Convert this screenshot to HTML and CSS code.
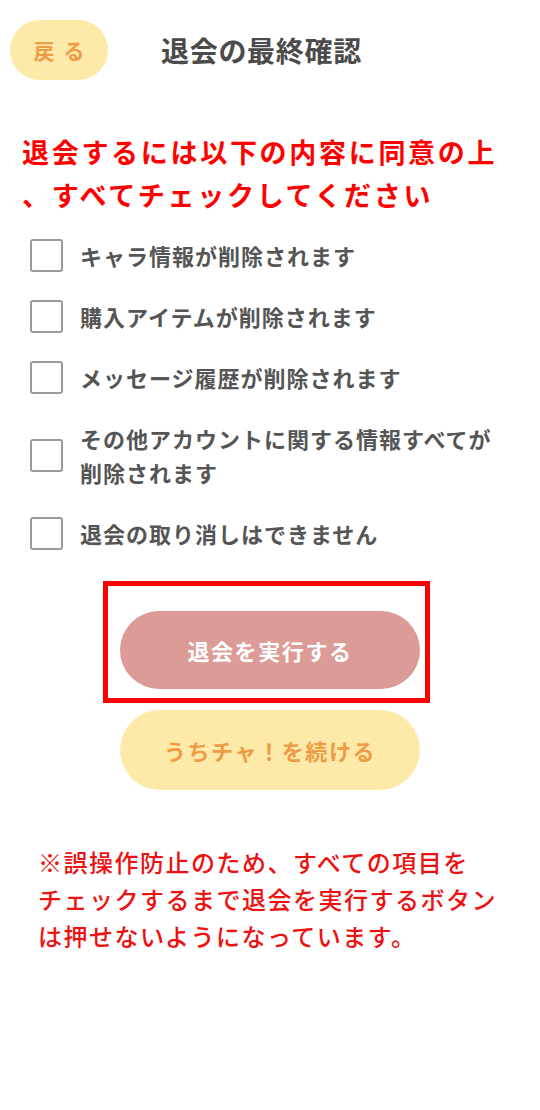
FILE: index.html
```html
<!DOCTYPE html>
<html lang="ja">
<head>
  <meta charset="utf-8">
  <title>退会の最終確認</title>
  <link rel="stylesheet" href="styles.css">
</head>
<body>
  <div class="page">
    <div class="header">
      <button class="back-button">戻る</button>
      <h1 class="title">退会の最終確認</h1>
    </div>

    <p class="lead">退会するには以下の内容に同意の上<br>、すべてチェックしてください</p>

    <ul class="check-list">
      <li class="check-item"><span class="check-box"></span><span class="check-text">キャラ情報が削除されます</span></li>
      <li class="check-item"><span class="check-box"></span><span class="check-text">購入アイテムが削除されます</span></li>
      <li class="check-item"><span class="check-box"></span><span class="check-text">メッセージ履歴が削除されます</span></li>
      <li class="check-item"><span class="check-box"></span><span class="check-text">その他アカウントに関する情報すべてが削除されます</span></li>
      <li class="check-item"><span class="check-box"></span><span class="check-text">退会の取り消しはできません</span></li>
    </ul>

    <div class="actions">
      <div class="highlight-frame">
        <button class="withdraw-button">退会を実行する</button>
      </div>
      <button class="continue-button">うちチャ！を続ける</button>
    </div>

    <p class="note">※誤操作防止のため、すべての項目を<br>チェックするまで退会を実行するボタン<br>は押せないようになっています。</p>
  </div>
</body>
</html>
```

FILE: styles.css
```css
body {
  margin: 0;
  background-color: #fff;
  font-family: "Noto Sans CJK JP", "Noto Sans", sans-serif;
}

.page {
  width: 540px;
  padding-top: 20px;
}

button {
  font-family: inherit;
  border: none;
  cursor: pointer;
}

/* Header */
.header {
  display: flex;
  align-items: center;
  padding-left: 10px;
}

.back-button {
  width: 98px;
  height: 60px;
  border-radius: 30px;
  background-color: #fdeaa8;
  color: #ee9b45;
  font-size: 21px;
  font-weight: bold;
  letter-spacing: 9px;
  padding: 0 0 0 9px;
}

.title {
  margin: 0 0 0 53px;
  font-size: 28px;
  letter-spacing: 0.7px;
  color: #4b4b4b;
  font-weight: bold;
}

/* Lead text */
.lead {
  margin: 50px 0 0 22px;
  font-size: 27px;
  line-height: 43px;
  letter-spacing: 2.7px;
  color: #ff0000;
  font-weight: bold;
}

/* Check list */
.check-list {
  list-style: none;
  margin: 22px 0 0;
  padding: 0 0 0 30px;
  display: flex;
  flex-direction: column;
  gap: 27px;
}

.check-item {
  display: flex;
  align-items: center;
}

.check-box {
  flex: none;
  width: 29px;
  height: 29px;
  border: 2px solid #9a9a9a;
  border-radius: 3px;
  margin-right: 17px;
}

.check-text {
  width: 425px;
  font-size: 22px;
  line-height: 34px;
  letter-spacing: 1px;
  color: #555;
  font-weight: bold;
}

/* Buttons */
.actions {
  margin-top: 31px;
  display: flex;
  flex-direction: column;
  align-items: flex-start;
}

.highlight-frame {
  margin-left: 103px;
  border: 5px solid #ff0000;
  padding: 25px 5px 9px 12px;
}

.withdraw-button {
  display: block;
  width: 300px;
  height: 78px;
  border-radius: 39px;
  background-color: #dc9b97;
  color: #fff;
  font-size: 22px;
  font-weight: bold;
  letter-spacing: 1.6px;
}

.continue-button {
  margin: 7px 0 0 120px;
  width: 300px;
  height: 80px;
  border-radius: 40px;
  background-color: #fdeaa8;
  color: #ee9b45;
  font-size: 22px;
  font-weight: bold;
  letter-spacing: 1.6px;
}

/* Note */
.note {
  margin: 53px 0 0 38px;
  font-size: 24px;
  line-height: 37px;
  letter-spacing: 1.5px;
  color: #ee1111;
  font-weight: 500;
}
```
